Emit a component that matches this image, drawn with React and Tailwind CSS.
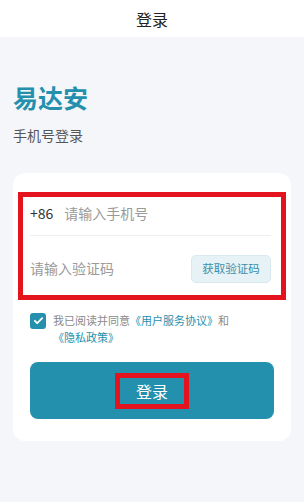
import React, { useState } from "react";

const App = () => {
  const [agreed, setAgreed] = useState(true);

  return (
    <div className="w-[304px] h-[502px] bg-[#f5f6fa] font-['Noto_Sans_CJK_SC','Noto_Sans',sans-serif] overflow-hidden">
      {/* header */}
      <div className="h-[37px] bg-white flex items-center justify-center">
        <span className="text-[16px] leading-none text-[#222]">登录</span>
      </div>

      {/* brand */}
      <div className="px-[13px]">
        <h1 className="mt-[48px] text-[25px] leading-[24px] font-bold text-[#2590ad]">
          易达安
        </h1>
        <p className="mt-[19px] text-[14px] leading-[14px] text-[#555]">手机号登录</p>
      </div>

      {/* card */}
      <div className="mx-[13px] mt-[31px] bg-white rounded-[12px] pt-[19px] pb-[22px]">
        <div className="mx-[5px] border-[5px] border-[#e3141d] pl-[7px] pr-[10px]">
          <div className="h-[39px] pb-[5px] flex items-center border-b border-[#eeeeee]">
            <span className="text-[14px] text-[#333]">+86</span>
            <input
              type="tel"
              placeholder="请输入手机号"
              className="ml-[11px] flex-1 text-[14px] text-[#333] placeholder:text-[#9a9a9a] outline-none bg-transparent"
            />
          </div>
          <div className="h-[59px] pt-[6px] flex items-center justify-between">
            <input
              type="text"
              placeholder="请输入验证码"
              className="w-[140px] text-[14px] text-[#333] placeholder:text-[#9a9a9a] outline-none bg-transparent"
            />
            <button
              type="button"
              className="w-[80px] h-[28px] rounded-[5px] bg-[#e7f2f6] border border-[#d8e9ef] text-[11.5px] text-[#3a8ea8] flex items-center justify-center"
            >
              获取验证码
            </button>
          </div>
        </div>

        <div className="px-[17px]">
          <div className="mt-[12px] flex items-start">
            <button
              type="button"
              onClick={() => setAgreed(!agreed)}
              className={`mt-[0.5px] w-[16px] h-[16px] shrink-0 rounded-[3px] flex items-center justify-center ${
                agreed ? "bg-[#2590ad]" : "bg-white border border-[#ccc]"
              }`}
            >
              {agreed && (
                <svg width="11" height="11" viewBox="0 0 12 12" fill="none">
                  <path
                    d="M2 6.3l2.6 2.6L10 3.5"
                    stroke="white"
                    strokeWidth="2"
                    strokeLinecap="round"
                    strokeLinejoin="round"
                  />
                </svg>
              )}
            </button>
            <p className="ml-[7px] text-[11px] leading-[17px] text-[#8a8a8a]">
              我已阅读并同意<span className="text-[#2590ad]">《用户服务协议》</span>和{" "}
              <span className="inline-block whitespace-nowrap text-[#2590ad]">《隐私政策》</span>
            </p>
          </div>

          <button
            type="submit"
            className="mt-[16px] w-full h-[57px] rounded-[8px] bg-[#2390ad] flex items-center justify-center"
          >
            <span className="w-[74px] h-[36px] border-[5px] border-[#e3141d] flex items-center justify-center text-[16px] text-white">
              登录
            </span>
          </button>
        </div>
      </div>
    </div>
  );
};

export default App;
